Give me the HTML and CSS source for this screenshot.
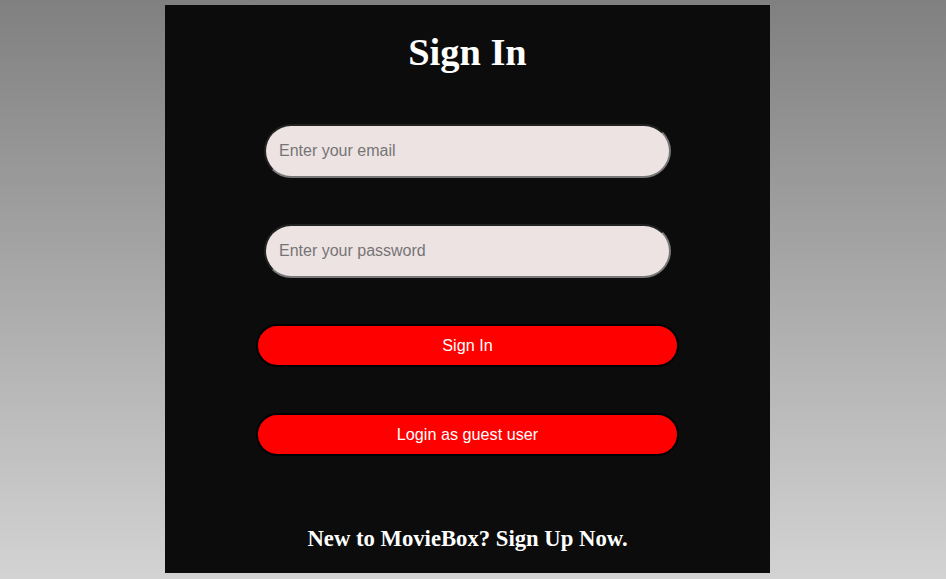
FILE: index.html
```html
<!DOCTYPE html>
<html lang="en">
<head>
<meta charset="utf-8">
<title>Sign In</title>
<link rel="stylesheet" href="styles.css">
</head>
<body>
  <div class="card">
    <h1 class="title">Sign In</h1>
    <form class="form">
      <input class="field" type="email" placeholder="Enter your email">
      <input class="field" type="password" placeholder="Enter your password">
      <button class="btn" type="button">Sign In</button>
      <button class="btn" type="button">Login as guest user</button>
    </form>
    <p class="footer">New to MovieBox? Sign Up Now.</p>
  </div>
</body>
</html>
```
FILE: styles.css
```css
html, body {
  margin: 0;
  padding: 0;
  height: 100%;
}
body {
  background: linear-gradient(#808080, #d3d3d3);
  font-family: "Liberation Serif", "Times New Roman", serif;
  overflow: hidden;
}
.card {
  margin: 5px 0 0 165px;
  width: 605px;
  height: 568px;
  background: #0c0c0c;
  display: flex;
  flex-direction: column;
  align-items: center;
}
.title {
  margin: 24px 0 0;
  font-size: 38.4px;
  line-height: 46px;
  font-weight: bold;
  color: #fff;
}
.form {
  margin-top: 49px;
  display: flex;
  flex-direction: column;
  align-items: center;
  gap: 46px;
}
.field {
  box-sizing: border-box;
  width: 407px;
  height: 54px;
  margin: 0;
  padding: 0 13px;
  border: 2px inset #777;
  border-radius: 27px;
  background: #ede3e3;
  font-family: "Liberation Sans", Arial, sans-serif;
  font-size: 16px;
  color: #222;
  outline: none;
}
.field::placeholder {
  color: #757575;
}
.btn {
  box-sizing: border-box;
  width: 423px;
  height: 43px;
  margin: 0;
  border: 2px solid #000;
  border-radius: 22px;
  background: #ff0000;
  color: #fff;
  font-family: "Liberation Sans", Arial, sans-serif;
  font-size: 16.2px;
  cursor: pointer;
}
.footer {
  margin: 69px 0 0;
  font-size: 22.7px;
  line-height: 27px;
  font-weight: bold;
  color: #fff;
}
```
